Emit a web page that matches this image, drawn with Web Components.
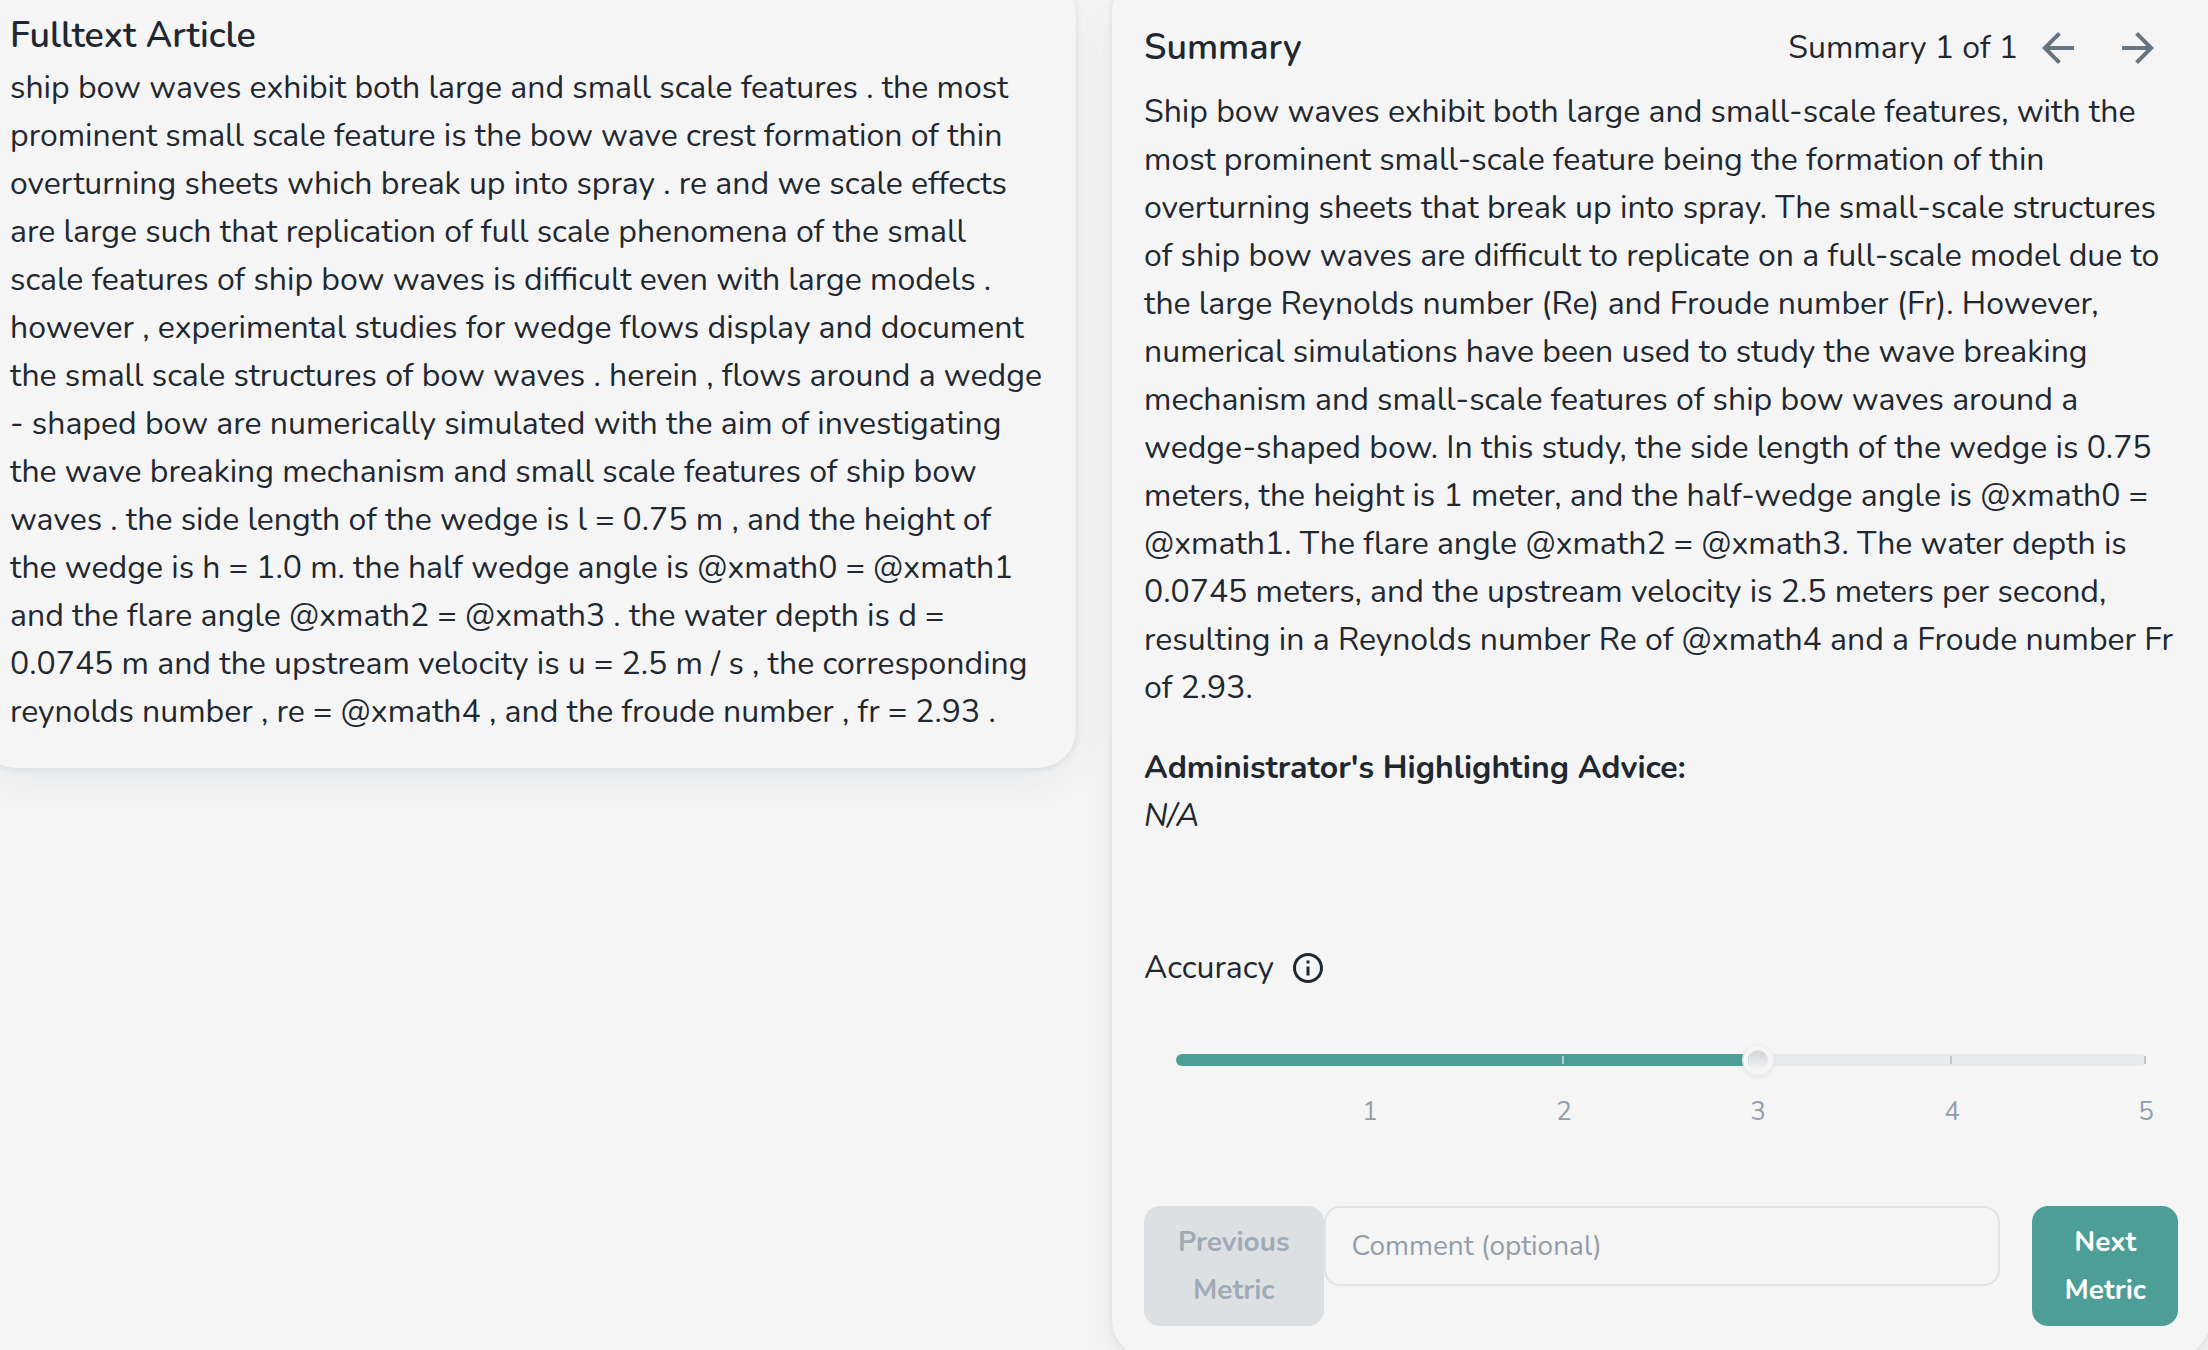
<!DOCTYPE html>
<html lang="en">
<head>
<meta charset="utf-8">
<meta name="viewport" content="width=device-width, initial-scale=1">
<title>Summary annotation</title>
<style>
  html { background: #f5f5f5; overflow: hidden; }
  body {
    --ink: #1f2830;
    --muted: #929eac;
    --line: #dfe3e6;
    --accent: #4d9e96;
    --surface: #f5f5f5;
    margin: 0;
    font: 400 32px/48px Nunito, Lato, sans-serif;
    color: var(--ink);
  }
</style>
</head>
<body>
<annotation-page></annotation-page>

<template id="annotation-page">
  <style>
    /* The cards bleed slightly past the viewport edges. */
    :host { display: grid; grid-template-columns: minmax(0, 1fr) minmax(0, 1fr); gap: 36px; align-items: start; margin: -24px -2px 0 -22px; }
    h2 { margin: 0; font-size: 36px; line-height: 56px; font-weight: 600; }
    p { margin: 0; }
    header { display: flex; align-items: center; justify-content: space-between; }
    .advice { margin-top: 32px; }
    em { display: block; }
    strong { font-weight: 700; }
    metric-slider { margin-top: 104px; }
    metric-footer { margin-top: 70px; }
  </style>
  <content-card>
    <h2>Fulltext Article</h2>
    <p>ship bow waves exhibit both large and small scale features . the most prominent small scale feature is the bow wave crest formation of thin overturning sheets which break up into spray . re and we scale effects are large such that replication of full scale phenomena of the small scale features of ship bow waves is difficult even with large models . however , experimental studies for wedge flows display and document the small scale structures of bow waves . herein , flows around a wedge - shaped bow are numerically simulated with the aim of investigating the wave breaking mechanism and small scale features of ship bow waves . the side length of the wedge is l = 0.75 m , and the height of the wedge is h = 1.0 m. the half wedge angle is @xmath0 = @xmath1 and the flare angle @xmath2 = @xmath3 . the water depth is d = 0.0745 m and the upstream velocity is u = 2.5 m / s , the corresponding reynolds number , re = @xmath4 , and the froude number , fr = 2.93 .</p>
  </content-card>
  <content-card>
    <header>
      <h2>Summary</h2>
      <summary-pager>Summary 1 of 1</summary-pager>
    </header>
    <p>Ship bow waves exhibit both large and small-scale features, with the most prominent small-scale feature being the formation of thin overturning sheets that break up into spray. The small-scale structures of ship bow waves are difficult to replicate on a full-scale model due to the large Reynolds number (Re) and Froude number (Fr). However, numerical simulations have been used to study the wave breaking mechanism and small-scale features of ship bow waves around a wedge-shaped bow. In this study, the side length of the wedge is 0.75 meters, the height is 1 meter, and the half-wedge angle is @xmath0 = @xmath1. The flare angle @xmath2 = @xmath3. The water depth is 0.0745 meters, and the upstream velocity is 2.5 meters per second, resulting in a Reynolds number Re of @xmath4 and a Froude number Fr of 2.93.</p>
    <p class="advice"><strong>Administrator's Highlighting Advice:</strong><em>N/A</em></p>
    <metric-slider>Accuracy</metric-slider>
    <metric-footer></metric-footer>
  </content-card>
</template>

<template id="content-card">
  <style>
    :host {
      display: block; padding: 32px; border-radius: 38px; background: var(--surface);
      box-shadow: 0 1px 6px rgba(50, 70, 95, .12), 0 16px 40px rgba(50, 70, 95, .06);
    }
  </style>
  <slot></slot>
</template>

<template id="summary-pager">
  <style>
    :host { display: flex; align-items: center; }
    button { display: flex; padding: 16px; border: 0; background: none; color: #667582; }
    svg { width: 48px; height: 48px; fill: currentColor; }
  </style>
  <span><slot></slot></span>
  <button type="button" aria-label="Previous summary"><svg viewBox="0 0 24 24"><path d="M20 11H7.83l5.59-5.59L12 4l-8 8 8 8 1.41-1.41L7.83 13H20v-2z"/></svg></button>
  <button type="button" aria-label="Next summary"><svg viewBox="0 0 24 24"><path d="M12 4l-1.41 1.41L16.17 11H4v2h12.17l-5.58 5.59L12 20l8-8z"/></svg></button>
</template>

<template id="metric-slider">
  <style>
    :host { display: block; }
    .title { display: flex; align-items: center; gap: 16px; }
    .title svg { width: 36px; height: 36px; fill: currentColor; }
    .slider { display: grid; margin: 48px 32px 0; align-items: center; }
    .track, input { grid-area: 1 / 1; }
    .track {
      display: grid; grid-template-columns: repeat(5, 1fr); align-items: center; height: 12px; border-radius: 6px;
      background: linear-gradient(90deg, var(--accent) 60%, #e8eaeb 60%);
    }
    .track i { justify-self: end; width: 2px; height: 8px; background: #c0c6cb; }
    .track i:nth-child(1) { background: none; }
    .track i:nth-child(2) { background: #b1d3d0; }
    input { -webkit-appearance: none; appearance: none; height: 40px; margin: 0 -15px; background: none; }
    input::-webkit-slider-thumb {
      -webkit-appearance: none; width: 30px; height: 30px; border: 5px solid #f5f5f5; border-radius: 50%;
      background: linear-gradient(#d0d4d8, #f4f4f5) padding-box;
      box-shadow: 0 0 0 1px #ececed, 0 3px 5px rgba(50, 70, 95, .08);
      box-sizing: border-box;
    }
    .marks { display: grid; grid-template-columns: repeat(5, 1fr); margin: 8px 32px 0; font-size: 26px; color: var(--muted); }
    .marks span { display: flex; justify-content: center; transform: translateX(50%); }
  </style>
  <div class="title"><label for="score"><slot></slot></label>
    <svg viewBox="0 0 24 24" aria-hidden="true"><path d="M11 7h2v2h-2zm0 4h2v6h-2zm1-9C6.48 2 2 6.48 2 12s4.48 10 10 10 10-4.48 10-10S17.52 2 12 2zm0 18c-4.41 0-8-3.59-8-8s3.59-8 8-8 8 3.59 8 8-3.59 8-8 8z"/></svg>
  </div>
  <div class="slider">
    <div class="track"><i></i><i></i><i></i><i></i><i></i></div>
    <input id="score" type="range" min="0" max="5" step="1" value="3">
  </div>
  <div class="marks"><span>1</span><span>2</span><span>3</span><span>4</span><span>5</span></div>
</template>

<template id="metric-footer">
  <style>
    :host { display: flex; align-items: flex-start; }
    button {
      flex: none; width: min-content; padding: 12px 32px; border: 0; border-radius: 16px;
      font: 700 28px/48px Nunito, Lato, sans-serif; color: #fff; background: var(--accent);
    }
    button:disabled { padding: 12px 34px; color: #a1abb6; background: #dce0e3; }
    input {
      flex: 1; min-width: 0; height: 80px; box-sizing: border-box; margin-right: 32px; padding: 0 26px;
      border: 2px solid var(--line); border-radius: 16px; background: none;
      font: 400 28px/48px Nunito, Lato, sans-serif; color: var(--ink);
    }
    input::placeholder { color: var(--muted); opacity: 1; }
  </style>
  <button type="button" disabled>Previous Metric</button>
  <input type="text" placeholder="Comment (optional)" aria-label="Comment (optional)">
  <button type="button">Next Metric</button>
</template>

<script>
  for (const name of ['content-card', 'summary-pager', 'metric-slider', 'metric-footer', 'annotation-page']) {
    customElements.define(name, class extends HTMLElement {
      constructor() {
        super();
        this.attachShadow({ mode: 'open' })
          .append(document.getElementById(name).content.cloneNode(true));
      }
    });
  }
</script>
</body>
</html>
